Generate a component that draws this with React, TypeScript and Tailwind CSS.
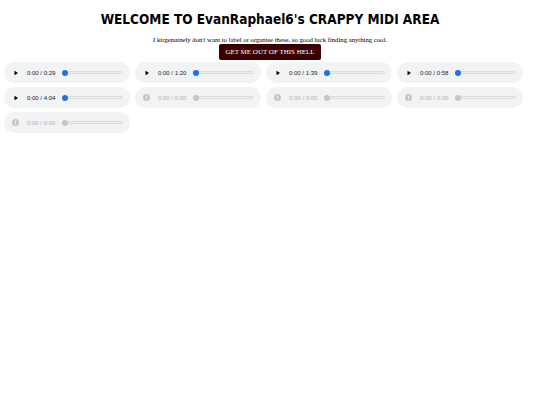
import React from "react";

type Track = { dur: string; ok: boolean };

const tracks: Track[] = [
  { dur: "0:29", ok: true },
  { dur: "1:20", ok: true },
  { dur: "1:39", ok: true },
  { dur: "0:58", ok: true },
  { dur: "4:04", ok: true },
  { dur: "0:00", ok: false },
  { dur: "0:00", ok: false },
  { dur: "0:00", ok: false },
  { dur: "0:00", ok: false },
];

function Player({ t }: { t: Track }) {
  return (
    <div className="flex h-[21px] w-[126px] items-center rounded-full bg-[#f1f3f4] pl-[9px] pr-[7px]">
      {t.ok ? (
        <svg width="6" height="6" viewBox="0 0 6 6" className="shrink-0">
          <path d="M1.5 0.8 L5 3 L1.5 5.2 Z" fill="#000" />
        </svg>
      ) : (
        <svg width="7" height="7" viewBox="0 0 7 7" className="shrink-0 -ml-[1px]">
          <circle cx="3.5" cy="3.5" r="3.5" fill="#c4c6c8" />
          <rect x="3" y="1.5" width="1" height="2.6" fill="#f1f3f4" />
          <rect x="3" y="4.7" width="1" height="1" fill="#f1f3f4" />
        </svg>
      )}
      <span
        className={`ml-[8px] whitespace-nowrap text-[6px] leading-none ${t.ok ? "text-[#202124]" : "text-[#b0b2b4]"}`}
        style={{ fontFamily: '"Liberation Sans", Arial, sans-serif' }}
      >
        0:00 / {t.dur}
      </span>
      <div className="relative ml-[7px] flex h-[6px] flex-1 items-center">
        <div className="h-[3px] w-full rounded-full border border-[#dadce0] bg-[#eceef0]" />
        <div
          className={`absolute left-0 top-0 h-[6px] w-[6px] rounded-full ${t.ok ? "bg-[#1a73e8]" : "bg-[#c4c6c8]"}`}
        />
      </div>
    </div>
  );
}

export default function App() {
  return (
    <div className="min-h-[405px] w-[540px] bg-white">
      <h1
        className="pt-[10px] text-center text-[13.5px] font-bold leading-[18px] text-black"
        style={{ fontFamily: '"DejaVu Sans Condensed", "DejaVu Sans", sans-serif' }}
      >
        WELCOME TO EvanRaphael6's CRAPPY MIDI AREA
      </h1>
      <p
        className="mt-[8px] text-center text-[6.7px] leading-[8px] text-black"
        style={{ fontFamily: '"Liberation Serif", "Times New Roman", serif' }}
      >
        I kirgenuinely don't want to label or organise these, so good luck finding anything cool.
      </p>
      <div className="flex justify-center">
        <button
          className="h-[16px] w-[102px] rounded-[2px] bg-[#3b0000] text-[7px] leading-none text-white"
          style={{ fontFamily: '"Liberation Serif", "Times New Roman", serif' }}
        >
          GET ME OUT OF THIS HELL
        </button>
      </div>
      <div className="mt-[2px] flex flex-wrap gap-x-[5px] gap-y-[4px] pl-[4px]">
        {tracks.map((t, i) => (
          <Player key={i} t={t} />
        ))}
      </div>
    </div>
  );
}
